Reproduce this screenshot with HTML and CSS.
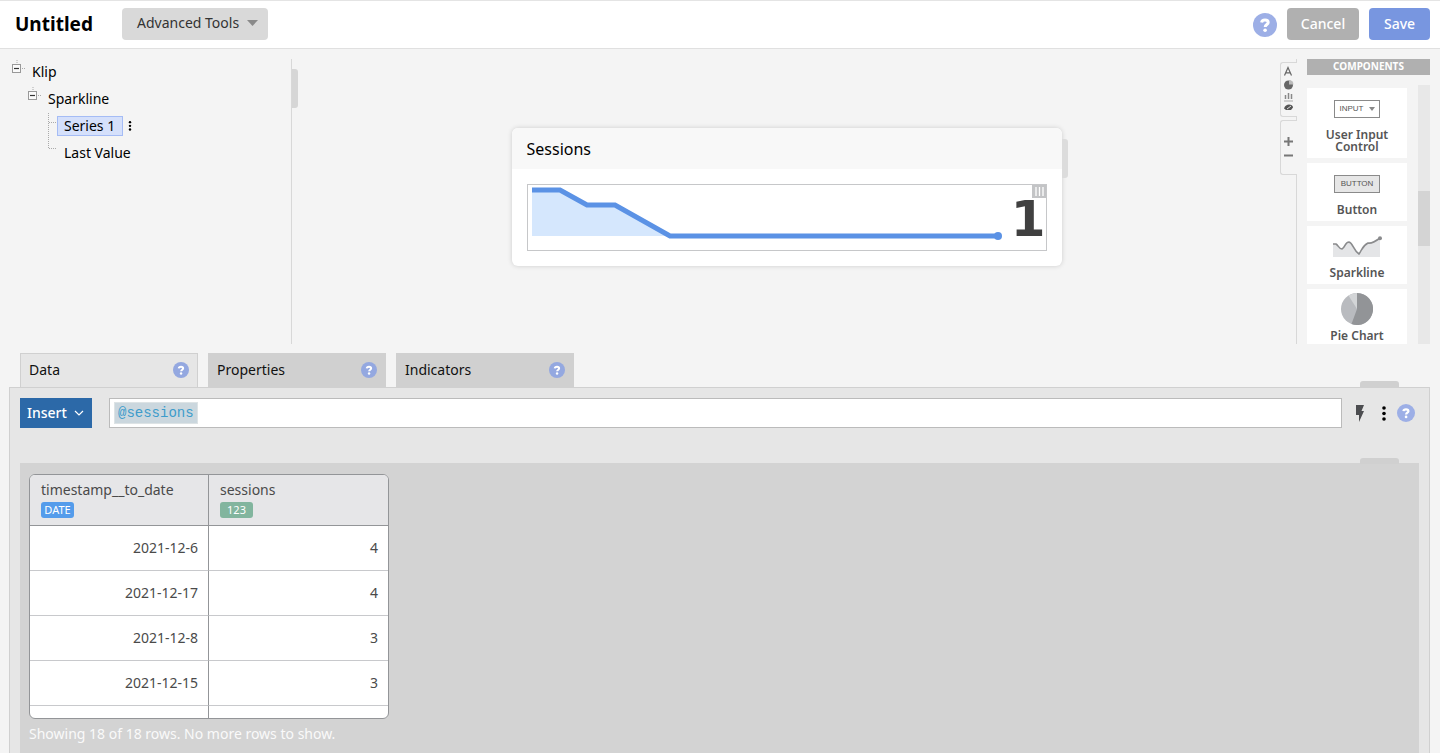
FILE: index.html
```html
<!DOCTYPE html>
<html lang="en">
<head>
<meta charset="utf-8">
<meta name="viewport" content="width=device-width, initial-scale=1">
<title>Untitled</title>
<link rel="stylesheet" href="styles.css">
</head>
<body>
<svg class="defs" aria-hidden="true">
  <symbol id="help" viewBox="0 0 24 24">
    <circle cx="12" cy="12" r="12" fill="currentColor"/>
    <path d="M8.600 9.500C8.800 7.800 10.200 7 12 7c2 0 3.200.9 3.200 2.500 0 2.100-3 2-3 4.500" fill="none" stroke="#fff" stroke-width="3"/>
    <circle cx="12.100" cy="17.200" r="1.800" fill="#fff"/>
  </symbol>
  <symbol id="kebab" viewBox="0 0 6 16">
    <circle cx="3" cy="3" r="1.8"/><circle cx="3" cy="8.500" r="1.8"/><circle cx="3" cy="14" r="1.8"/>
  </symbol>
  <symbol id="collapse" viewBox="0 0 14 16">
    <path d="M5 1v4M10 9.500h4" stroke="#aaa" stroke-dasharray="1 1" fill="none"/>
    <rect x=".5" y="5.500" width="8" height="8" fill="#fafafa" stroke="#999"/>
    <path d="M2 9.500h5" stroke="#333" stroke-width="1.200"/>
  </symbol>
</svg>

<header class="topbar">
  <h1 class="title">Untitled</h1>
  <button class="btn btn-tools" type="button">Advanced Tools
    <svg width="11" height="6" viewBox="0 0 11 6" aria-hidden="true"><path d="M0 0h11L5.500 6z" fill="#8a8a8a"/></svg>
  </button>
  <div class="actions">
    <button class="help help-lg" type="button" aria-label="Help"><svg><use href="#help"/></svg></button>
    <button class="btn btn-cancel" type="button">Cancel</button>
    <button class="btn btn-save" type="button">Save</button>
  </div>
</header>

<main class="main">
  <section class="workspace">
    <nav class="tree" aria-label="Klip structure">
      <ul class="branch">
        <li>
          <div class="node"><svg class="toggle"><use href="#collapse"/></svg><span>Klip</span></div>
          <ul class="branch">
            <li>
              <div class="node"><svg class="toggle"><use href="#collapse"/></svg><span>Sparkline</span></div>
              <ul class="branch">
                <li class="node leaf">
                  <svg class="line" viewBox="0 0 9 27"><path d="M.5 1v26M1 10.500h8" stroke="#aaa" stroke-dasharray="1 1" fill="none"/></svg>
                  <span class="chip">Series 1</span>
                  <button class="more" type="button" aria-label="Series options"><svg width="4" height="11"><use href="#kebab"/></svg></button>
                </li>
                <li class="node leaf">
                  <svg class="line" viewBox="0 0 9 27"><path d="M.5 0v9M1 9.500h8" stroke="#aaa" stroke-dasharray="1 1" fill="none"/></svg>
                  <span class="plain">Last Value</span>
                </li>
              </ul>
            </li>
          </ul>
        </li>
      </ul>
    </nav>

    <div class="canvas">
      <article class="klip">
        <h2 class="klip-title">Sessions</h2>
        <div class="klip-body">
          <div class="spark">
            <svg class="spark-chart" viewBox="0 0 472 60" role="img" aria-label="Sessions trend">
              <path d="M0 5h28l27 15h28l55 31H0z" fill="#d5e7fd"/>
              <path d="M0 5h28l27 15h28l55 31h328" fill="none" stroke="#5b92e5" stroke-width="5"/>
              <circle cx="466" cy="51" r="4" fill="#5b92e5"/>
            </svg>
            <span class="spark-value">1</span>
            <span class="grip"><svg width="14" height="13" viewBox="0 0 14 13"><path d="M4 2v9M7.500 2v9M11 2v9" stroke="#fff" stroke-width="1.300"/></svg></span>
          </div>
        </div>
      </article>
    </div>

    <div class="strip">
      <div class="strip-box">
        <svg width="14" height="53" viewBox="0 0 14 53" aria-hidden="true">
          <path d="M3.500 12.500 7 4.500l3.500 8M4.800 9.800h4.500" fill="none" stroke="#666" stroke-width="1.200"/>
          <circle cx="7.500" cy="22" r="4.500" fill="#666"/><path d="M8 21.500V17a4.500 4.500 0 0 1 4.500 4.500z" fill="#bbb"/>
          <path d="M4.500 36v-4M7.500 36v-6M10.500 36v-5" stroke="#888" stroke-width="1.500"/><path d="M3 38h9" stroke="#aaa"/>
          <path d="M3 45.500c1-3 3-4 5-4s4 1 4 3l-2 2.500H5z" fill="#555"/><path d="m6 46 4-3" stroke="#ddd"/>
        </svg>
      </div>
      <div class="strip-box">
        <svg width="14" height="53" viewBox="0 0 14 53" aria-hidden="true"><path d="M3 20.500h9M7.500 16v9M3 34.500h9" stroke="#777" stroke-width="2"/></svg>
      </div>
    </div>

    <aside class="palette">
      <h2 class="palette-title">COMPONENTS</h2>
      <div class="palette-scroll">
        <div class="palette-list">
          <div class="part"><span class="mini mini-input">INPUT <svg width="6" height="4" viewBox="0 0 6 4"><path d="M0 0h6L3 4z" fill="#888"/></svg></span><span class="part-name">User Input Control</span></div>
          <div class="part"><span class="mini mini-button">BUTTON</span><span class="part-name">Button</span></div>
          <div class="part">
            <svg class="part-spark" width="50" height="22" viewBox="0 0 50 22"><path d="M1 8h3c3 0 3 5 6 5s3-7 7-7 4 9 10 12c3-4 4-9 9-11 4 1 8-2 12-5v19H1z" fill="#e4e5e7"/><path d="M1 8h3c2 1 3 5 6 5 3-1 3-7 7-7 4 1 4 8 10 12 3-4 3-8 9-11 4 1 8-2 12-5" fill="none" stroke="#8a8b8d" stroke-width="1.600"/><circle cx="48" cy="2.200" r="2" fill="#8a8b8d"/></svg>
            <span class="part-name">Sparkline</span>
          </div>
          <div class="part">
            <svg class="part-pie" width="32" height="32" viewBox="0 0 32 32"><circle cx="16" cy="16" r="16" fill="#b9bbbf"/><path d="M16 16V0a16 16 0 1 1-5.500 31z" fill="#929497"/><path d="M16 16V0a16 16 0 0 0-8.500 2.500z" fill="#d3d5d7"/></svg>
            <span class="part-name">Pie Chart</span>
          </div>
        </div>
        <div class="track"><div class="thumb"></div></div>
      </div>
    </aside>
  </section>

  <section class="editor">
    <div class="tabs" role="tablist">
      <button class="tab tab-active" type="button" role="tab" aria-selected="true">Data <svg class="tab-help"><use href="#help"/></svg></button>
      <button class="tab" type="button" role="tab" aria-selected="false">Properties <svg class="tab-help"><use href="#help"/></svg></button>
      <button class="tab" type="button" role="tab" aria-selected="false">Indicators <svg class="tab-help"><use href="#help"/></svg></button>
    </div>
    <div class="panel">
      <div class="formula">
        <button class="insert" type="button">Insert <svg width="10" height="6" viewBox="0 0 10 6" aria-hidden="true"><path d="m1 1 4 4 4-4" fill="none" stroke="#fff" stroke-width="1.200"/></svg></button>
        <div class="field"><span class="token">@sessions</span><input class="field-input" type="text" aria-label="Formula"></div>
        <button class="icon-btn" type="button" aria-label="Evaluate"><svg width="10" height="17" viewBox="0 0 10 17"><path d="M1 0h8L6.500 6H9L4 17V10H1z" fill="#4c4d50"/></svg></button>
        <button class="icon-btn" type="button" aria-label="More"><svg width="6" height="16"><use href="#kebab"/></svg></button>
        <button class="help help-md" type="button" aria-label="Formula help"><svg><use href="#help"/></svg></button>
      </div>
      <div class="results">
        <div class="grid-wrap">
          <table class="grid">
            <thead><tr>
              <th scope="col">timestamp__to_date<span class="type type-date">DATE</span></th>
              <th scope="col">sessions<span class="type type-num">123</span></th>
            </tr></thead>
            <tbody>
              <tr><td>2021-12-6</td><td>4</td></tr>
              <tr><td>2021-12-17</td><td>4</td></tr>
              <tr><td>2021-12-8</td><td>3</td></tr>
              <tr><td>2021-12-15</td><td>3</td></tr>
              <tr><td></td><td></td></tr>
            </tbody>
          </table>
        </div>
        <p class="status">Showing 18 of 18 rows. No more rows to show.</p>
      </div>
    </div>
  </section>
</main>
</body>
</html>
```

FILE: styles.css
```css
* { box-sizing: border-box; }

body {
  margin: 0;
  min-height: 100vh;
  display: flex;
  flex-direction: column;
  background: #f4f4f4;
  color: #000;
  font: 14px/20px "Noto Sans", "Open Sans", sans-serif;
}

button { font: inherit; border: 0; padding: 0; background: none; cursor: pointer; }
svg { display: block; flex: none; }
h1, h2, p, ul { margin: 0; padding: 0; }
ul { list-style: none; }
.defs { position: absolute; width: 0; height: 0; }

/* Top bar */
.topbar {
  display: flex;
  align-items: center;
  height: 49px;
  padding: 0 10px 1px 15px;
  background: #fff;
  border-top: 1px solid #e4e4e4;
  border-bottom: 1px solid #e0e0e0;
}
.title { width: 107px; font-size: 19px; line-height: 28px; font-weight: 700; }
.btn { height: 32px; border-radius: 4px; color: #fff; }
.btn-tools {
  display: flex;
  align-items: center;
  justify-content: space-between;
  width: 146px;
  padding: 0 10px 2px 15px;
  background: #d9d9d9;
  color: #333;
}
.actions { display: flex; align-items: center; gap: 10px; margin-left: auto; }
.btn-cancel { width: 72px; background: #b0b0b0; font-weight: 500; }
.btn-save { width: 61px; background: #7896e0; font-weight: 500; }
.help svg { width: 100%; height: 100%; }
.help { color: #9dafe6; }
.help-lg { width: 24px; height: 24px; margin-top: 2px; }
.help-md { width: 18px; height: 18px; }

.main { flex: 1; display: flex; flex-direction: column; }

/* Workspace */
.workspace {
  display: grid;
  grid-template-columns: 292px 1fr 17px 133px;
  height: 285px;
  margin: 10px 10px 0 0;
}
.tree { position: relative; padding-left: 12px; border-right: 1px solid #d8d8d8; }
.tree::after {
  content: "";
  position: absolute;
  top: 10px;
  right: -7px;
  width: 6px;
  height: 39px;
  border-radius: 0 3px 3px 0;
  background: #d6d6d6;
}
.branch .branch { padding-left: 16px; }
.node { display: flex; align-items: center; height: 27px; padding-bottom: 2px; }
.toggle { width: 14px; height: 16px; margin-right: 6px; align-self: flex-start; }
.leaf { margin-left: 4px; }
.line { width: 9px; height: 27px; }
.chip { padding: 0 7px 0 6px; line-height: 18px; background: #d5e0fb; border: 1px solid #a5bcf5; }
.plain { padding-left: 7px; }
.more { padding: 4px 5px; }

.canvas { display: flex; justify-content: center; align-items: flex-start; padding: 69px 9px 0 10px; }
.klip { position: relative; width: 550px; border-radius: 6px; background: #fff; box-shadow: 0 0 5px rgba(0, 0, 0, .16); }
.klip::after {
  content: "";
  position: absolute;
  top: 11px;
  right: -6px;
  width: 6px;
  height: 39px;
  border-radius: 0 3px 3px 0;
  background: #dcdcdc;
}
.klip-title { padding: 9px 15px 8px; font-size: 16px; line-height: 24px; font-weight: 400; background: #f8f8f8; border-radius: 6px 6px 0 0; }
.klip-body { padding: 15px; }
.spark { position: relative; display: flex; justify-content: space-between; height: 67px; padding: 0 0 0 4px; border: 1px solid #c6c7c9; }
.spark-chart { width: 472px; height: 60px; }
.spark-value { font: 700 50px/68px "DejaVu Sans", sans-serif; color: #404040; }
.grip { position: absolute; top: 0; right: 0; background: #c3c4c6; }

.strip { padding-top: 3px; border-right: 1px solid #d8d8d8; }
.strip-box { height: 55px; margin: 0 -1px 3px 0; border: 1px solid #d8d8d8; border-right: 0; border-radius: 3px 0 0 3px; background: #f4f4f4; }

.palette { display: flex; flex-direction: column; min-height: 0; padding-left: 10px; }
.palette-title { padding-bottom: 1px; background: #b0b0b0; color: #fff; font-size: 10px; line-height: 15px; font-weight: 700; text-align: center; }
.palette-scroll { flex: 1; display: flex; justify-content: space-between; min-height: 0; margin-top: 10px; overflow: hidden; }
.palette-list { display: flex; flex-direction: column; gap: 5px; width: 100px; padding-top: 3px; }
.part { display: flex; flex-direction: column; justify-content: space-between; align-items: center; flex: none; min-height: 58px; padding: 12px 8px 5px; background: #fff; text-align: center; }
.part:first-child { height: 70px; }
.part-name { font-size: 12px; line-height: 12px; font-weight: 600; color: #555; }
.part-spark { margin-top: -2px; }
.part-pie { margin-top: -8px; }
.mini { display: flex; align-items: center; justify-content: center; gap: 5px; width: 46px; height: 18px; border: 1px solid #8a8a8a; font: 8px/14px "Liberation Sans", Arial, sans-serif; color: #555; }
.mini-button { background: #e6e6e6; }
.track { width: 12px; padding-top: 106px; background: #e8e8e8; }
.thumb { height: 55px; background: #d4d4d4; }

/* Editor */
.editor { flex: 1; display: flex; flex-direction: column; padding: 9px 10px 0 9px; }
.tabs { display: flex; gap: 10px; padding-left: 11px; }
.tab { display: flex; align-items: center; justify-content: space-between; width: 178px; height: 34px; padding: 0 9px; background: #d0d0d0; color: #111; }
.tab-active { position: relative; height: 35px; margin-bottom: -1px; padding: 0 8px 2px; background: #e6e6e6; border: 1px solid #d0d0d0; border-bottom: 0; }
.tab-help { width: 16px; height: 16px; color: #94a8e0; }
.panel { position: relative; flex: 1; display: flex; flex-direction: column; padding: 10px 10px 0; background: #e6e6e6; border: 1px solid #d0d0d0; border-bottom: 0; }
.panel::before, .results::before {
  content: "";
  position: absolute;
  right: 30px;
  top: -7px;
  width: 39px;
  height: 6px;
  border-radius: 3px 3px 0 0;
  background: #d0d0d0;
}
.formula { display: flex; align-items: center; height: 30px; }
.insert { display: flex; align-items: center; justify-content: space-between; width: 72px; height: 30px; margin-right: 17px; padding: 0 8px 0 7px; background: #2c69a8; color: #fff; font-weight: 500; }
.field { flex: 1; display: flex; align-items: center; height: 30px; margin-right: 13px; padding: 0 4px; background: #fff; border: 1px solid #bbb; }
.token { padding: 0 3px; border: 1px solid #dde3e5; background: #cbd7de; color: #3d9ccb; font: 14px/20px "Liberation Mono", monospace; }
.field-input { flex: 1; min-width: 0; border: 0; outline: 0; background: none; font: 14px/20px "Liberation Mono", monospace; }
.icon-btn { margin-right: 16px; }
.icon-btn + .icon-btn { margin-right: 10px; }
.formula .help-md { margin-right: 4px; }

.results { position: relative; flex: 1; margin-top: 35px; padding: 11px 9px 0; background: #d3d3d3; }
.results::before { right: 20px; top: -5px; }
.grid-wrap { width: 360px; height: 245px; overflow: hidden; border: 1px solid #939598; border-radius: 6px; background: #fff; }
.grid { width: 100%; table-layout: fixed; border-collapse: separate; border-spacing: 0; color: #4a4a4a; }
.grid th { height: 51px; padding: 5px 11px; text-align: left; vertical-align: top; font-weight: 400; background: #e6e6e8; border-bottom: 1px solid #939598; }
.grid td { height: 45px; padding: 0 10px; text-align: right; border-bottom: 1px solid #c8c9cc; }
.grid th:first-child, .grid td:first-child { border-right: 1px solid #939598; }
.type { display: block; width: 33px; margin-top: 2px; border-radius: 3px; font-size: 11px; line-height: 16px; color: #fff; text-align: center; }
.type-date { background: #549ceb; }
.type-num { background: #82b59e; }
.status { margin-top: 5px; color: #fafafa; }
```
